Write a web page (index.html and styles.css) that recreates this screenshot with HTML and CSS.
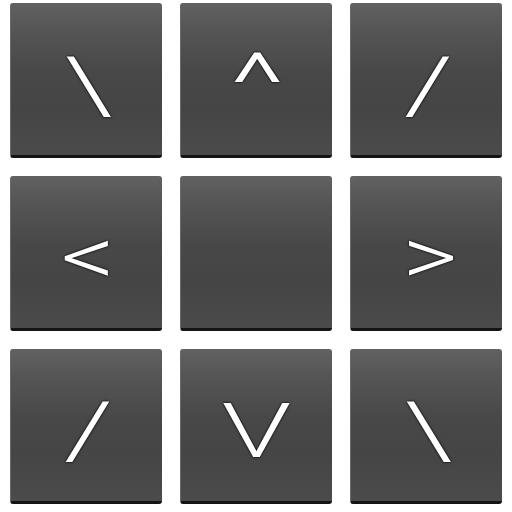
FILE: index.html
```html
<!DOCTYPE html>
<html>
<head>
<meta charset="utf-8">
<link rel="stylesheet" href="styles.css">
</head>
<body>
<div class="pad">
  <div class="key"><span class="g g-slash">\</span></div>
  <div class="key"><span class="g g-caret">^</span></div>
  <div class="key"><span class="g g-slash">/</span></div>
  <div class="key"><span class="g g-angle g-lt">&lt;</span></div>
  <div class="key"></div>
  <div class="key"><span class="g g-angle g-gt">&gt;</span></div>
  <div class="key"><span class="g g-slash g-low">/</span></div>
  <div class="key"><span class="g g-v">V</span></div>
  <div class="key"><span class="g g-slash g-low">\</span></div>
</div>
</body>
</html>
```
FILE: styles.css
```css
html, body {
  margin: 0;
  padding: 0;
  background: #ffffff;
  width: 512px;
  height: 512px;
  overflow: hidden;
}
.pad {
  display: grid;
  grid-template-columns: repeat(3, 152px);
  grid-template-rows: repeat(3, 155px);
  column-gap: 18px;
  row-gap: 18px;
  padding: 3px 0 0 10px;
}
.key {
  box-sizing: border-box;
  border-radius: 3px;
  background: linear-gradient(#616161 0%, #555 18%, #484848 45%, #454545 70%, #4b4b4b 100%);
  border-left: 1px solid #6a6a6a;
  border-bottom: 3px solid #141414;
  display: flex;
  align-items: center;
  justify-content: center;
}
.g {
  display: inline-block;
  font-family: "Roboto", "Liberation Sans", sans-serif;
  font-weight: 300;
  color: #ffffff;
  text-shadow: 0 0 2px #000, 0 0 1px #000;
  line-height: 1;
}
.g-slash { font-size: 78px; transform: translate(2px, 7px) scaleX(1.6); }
.g-low { transform: translate(2px, 6px) scaleX(1.6); }
.g-caret { font-size: 84px; transform: translate(1px, 5px) scaleX(1.6); }
.g-angle { font-size: 74px; }
.g-lt { transform: translate(1px, 5px) scale(1.44, 1.12); }
.g-gt { transform: translate(4px, 5px) scale(1.44, 1.12); }
.g-v { font-size: 76px; transform: translateY(6px) scaleX(1.49); }
```
